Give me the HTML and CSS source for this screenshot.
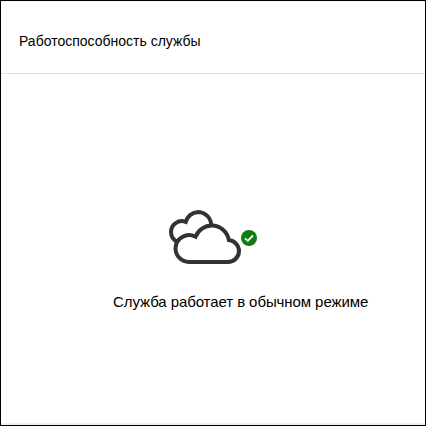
FILE: index.html
```html
<!DOCTYPE html>
<html lang="ru">
<head>
<meta charset="utf-8">
<title>Работоспособность службы</title>
<link rel="stylesheet" href="styles.css">
</head>
<body>
<section class="card">
  <header class="card-header"><h1 class="title">Работоспособность службы</h1></header>
  <div class="card-body">
    <svg class="status-icon" width="92" height="58" viewBox="167 208 92 58" aria-hidden="true">
      <path class="cloud" d="M177.500 241.800A11 11 0 0 1 171 232A10.800 10.800 0 0 1 185.700 221.900A13.500 13.500 0 0 1 198.300 211.900A13.500 13.500 0 0 1 211.200 226"/>
      <path class="cloud front" d="M189 262A13.600 13.600 0 0 1 175.500 248.300A13.600 13.600 0 0 1 195.500 236.700A17.800 17.800 0 0 1 212 225.500A17.300 17.300 0 0 1 228.800 240A11.200 11.200 0 0 1 239 251A11 11 0 0 1 228 262Z"/>
      <circle class="badge" cx="249" cy="238" r="8"/>
      <path class="check" d="M245 238.300L247.800 240.800L253 235.500"/>
    </svg>
    <p class="message">Служба работает в обычном режиме</p>
  </div>
</section>
</body>
</html>
```
FILE: styles.css
```css
* { box-sizing: border-box; }
body { margin: 0; font-family: "Liberation Sans", Arial, sans-serif; color: #000; }
.card { width: 426px; height: 426px; border: 1px solid #000; background: #fff; display: flex; flex-direction: column; box-shadow: inset 0 1px #f5f5f5, inset 0 -2px #eeefee; }
.card-header { height: 73px; padding: 31px 18px 0; border-bottom: 1px solid #e1e1e1; }
.title { margin: 0; font-size: 14px; line-height: 18px; font-weight: 400; white-space: nowrap; }
.card-body { flex: 1; padding-top: 134px; }
.status-icon { display: block; margin-left: 166px; }
.cloud { fill: none; stroke: #323232; stroke-width: 4; }
.front { fill: #fff; }
.badge { fill: #107c10; }
.check { fill: none; stroke: #fff; stroke-width: 1.8; }
.message { margin: 26px 0 0 112px; font-size: 15px; line-height: 20px; letter-spacing: -0.08px; white-space: nowrap; }
```
